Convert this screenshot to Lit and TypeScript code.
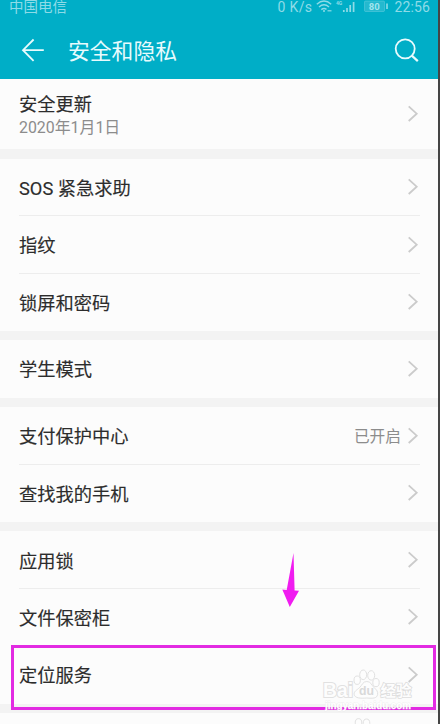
import { LitElement, html, css, svg, nothing } from "lit";
import { customElement, property } from "lit/decorators.js";

interface Item {
  title: string;
  note?: string;
  value?: string;
}

const GROUPS: Item[][] = [
  [{ title: "安全更新", note: "2020年1月1日" }],
  [{ title: "SOS 紧急求助" }, { title: "指纹" }, { title: "锁屏和密码" }],
  [{ title: "学生模式" }],
  [{ title: "支付保护中心", value: "已开启" }, { title: "查找我的手机" }],
  [{ title: "应用锁" }, { title: "文件保密柜" }, { title: "定位服务" }],
];

@customElement("status-bar")
class StatusBar extends LitElement {
  static styles = css`
    :host {
      display: flex;
      justify-content: space-between;
      height: 22px;
      padding: 0 8px 0 9px;
      font-size: 14px;
      line-height: 14px;
      color: #8edbe7;
    }
    .carrier { font-size: 14.5px; line-height: 15px; }
    .info { display: flex; gap: 4px; }
    .net { letter-spacing: 0.35px; }
    .time { letter-spacing: 0.15px; }
    svg { display: block; }
    .small { font: 700 5px "Roboto", sans-serif; }
    .level { font: 700 9.5px "Roboto", sans-serif; }
  `;

  render() {
    return html`
      <span class="carrier">中国电信</span>
      <div class="info">
        <span class="net">0 K/s</span>
        <svg width="74" height="14" viewBox="0 0 74 14" fill="none" stroke="#8edbe7" stroke-width="1.4">
          <path d="M.8 4.2Q8 -2 15.2 4.2M3 7Q8 2.6 13 7M5.3 9.6Q8 7.4 10.5 9.4" />
          <circle cx="8" cy="11" r="1" fill="#8edbe7" stroke="none" />
          <path d="M11.5 10.8h4" stroke-width="1.2" />
          <text class="small" x="20" y="4.8" fill="#8edbe7" stroke="none">4G</text>
          <path d="M27.8 12v-2M31 12V8M34.2 12V5M37.6 12V2" stroke-width="1.7" />
          <rect x="48.5" y="1" width="20" height="10.5" rx="1" fill="#8edbe7" fill-opacity=".25" stroke-opacity=".35" stroke-width="1" />
          <text class="level" x="52.8" y="9.6" fill="#a5e4ec" stroke="none">80</text>
          <path d="M71 3.5v5.5" stroke-width="1.6" />
        </svg>
        <span class="time">22:56</span>
      </div>
    `;
  }
}

@customElement("title-bar")
class TitleBar extends LitElement {
  static styles = css`
    :host {
      display: flex;
      align-items: center;
      height: 57px;
      padding: 0 19px 0 20px;
      color: #e8fbfd;
    }
    .title {
      flex: 1;
      margin-left: 22px;
      padding-top: 2px;
      font-size: 21.8px;
      line-height: 30px;
    }
    svg { display: block; }
  `;

  render() {
    return html`
      <svg width="26" height="26" viewBox="0 0 26 26" fill="none" stroke="#e8fbfd" stroke-width="1.8">
        <path d="M23.8 12.2H3M13.6 1.5 3 12.2l10.6 10.7" />
      </svg>
      <span class="title">安全和隐私</span>
      <svg width="26" height="26" viewBox="0 0 26 26" fill="none" stroke="#e8fbfd" stroke-width="1.8">
        <circle cx="12.2" cy="10.8" r="9.5" />
        <path d="m18.8 17.6 6 5.5" stroke-width="2.2" />
      </svg>
    `;
  }
}

@customElement("settings-row")
class SettingsRow extends LitElement {
  @property({ attribute: false }) item!: Item;

  static styles = css`
    :host {
      display: flex;
      align-items: center;
      box-sizing: border-box;
      height: 57.4px;
      margin: 0 18px 0 19px;
    }
    .label { flex: 1; display: flex; flex-direction: column; padding-top: 3.2px; }
    .title { font-size: 18.25px; line-height: 24px; color: #2c2c2c; -webkit-text-stroke: 0.15px #2c2c2c; }
    .note { font-size: 15.9px; line-height: 22px; color: #8c8c8c; }
    .value { font-size: 15.7px; line-height: 24px; padding-top: 3.2px; color: #8c8c8c; margin-right: 6px; }
    .chevron { display: block; margin-right: 1px; }
  `;

  render() {
    const { title, note, value } = this.item;
    return html`
      <div class="label">
        <span class="title">${title}</span>
        ${note ? html`<span class="note">${note}</span>` : nothing}
      </div>
      ${value ? html`<span class="value">${value}</span>` : nothing}
      <svg class="chevron" width="12" height="18" viewBox="0 0 12 18" fill="none" stroke="#cbcbcb" stroke-width="1.8">
        <path d="m1.7 1.4 8 7.3-8 7.3" />
      </svg>
    `;
  }
}

@customElement("site-mark")
class SiteMark extends LitElement {
  static styles = css`
    :host { display: block; }
    svg { display: block; overflow: visible; }
    .shape { fill: #fdfdfd; stroke: #e1e1e1; stroke-width: 1; }
    .word { font: 700 19.5px "Liberation Sans", sans-serif; paint-order: stroke; stroke-width: 2; }
    .du { font: 700 13px "Liberation Sans", sans-serif; fill: #d9d9d9; stroke: none; }
    .han { font: 700 15px "Noto Sans CJK SC", sans-serif; paint-order: stroke; stroke: #dedede; stroke-width: 1.6; }
    .url { font: 700 10px "Liberation Sans", sans-serif; fill: #fff; stroke: #e6e6e6; stroke-opacity: 0.6; stroke-width: 0.8; paint-order: stroke; }
  `;

  render() {
    const toes = [
      [34.2, 10.2, 3.2, 4.2],
      [40.2, 4.8, 3.5, 4.8],
      [48.2, 5.4, 3.5, 4.7],
      [53, 12.6, 3.2, 4.1],
    ];
    return html`
      <svg width="92" height="54" viewBox="0 0 92 54">
        <text class="shape word" x="0" y="27" textLength="30" lengthAdjust="spacingAndGlyphs">Bai</text>
        ${toes.map(([cx, cy, rx, ry]) => svg`<ellipse class="shape" cx=${cx} cy=${cy} rx=${rx} ry=${ry} />`)}
        <path class="shape" d="M43.8 11.5c4 0 4.5 3.3 7 5.8 3 2.9 4.3 4.2 3.8 7.2-.7 4-4.5 4-10.8 3.5-6.3.5-12 .3-12.6-3.6-.4-3 2.6-4.3 5.6-7 2.6-2.6 3-5.9 7-5.9Z" />
        <text class="du" x="36" y="25.2" textLength="15" lengthAdjust="spacingAndGlyphs">du</text>
        <text class="shape han" x="57.5" y="26" textLength="31" lengthAdjust="spacingAndGlyphs">经验</text>
        <text class="url" x="2" y="38.6" textLength="86" lengthAdjust="spacingAndGlyphs">jingyan.baidu.com</text>
        <ellipse class="shape" cx="35.5" cy="53" rx="3.3" ry="4.4" />
        <ellipse class="shape" cx="43.5" cy="53.4" rx="3.3" ry="4.4" />
      </svg>
    `;
  }
}

@customElement("app-root")
class AppRoot extends LitElement {
  static styles = css`
    :host {
      display: block;
      position: relative;
      box-sizing: border-box;
      width: 440px;
      height: 724px;
      overflow: hidden;
      border-right: 2px solid #454545;
      background: #f3f3f3;
      font-family: "Roboto", "Noto Sans CJK SC", sans-serif;
    }
    .header { background: #00aec7; height: 79px; }
    .list { display: flex; flex-direction: column; gap: 9.5px; }
    .group { background: #fcfcfc; }
    .group:first-child { height: 70px; display: flex; flex-direction: column; justify-content: center; }
    .line { height: 1px; margin: -0.5px 18px -0.5px 19px; background: #ededed; }
    .rest { height: 40px; }
    .frame {
      position: absolute;
      left: 11px;
      top: 645px;
      width: 425px;
      height: 65px;
      box-sizing: border-box;
      border: 3px solid #e22be2;
    }
    .arrow { position: absolute; left: 282px; top: 552px; }
    .mark { position: absolute; left: 323px; top: 670px; }
  `;

  render() {
    return html`
      <div class="header">
        <status-bar></status-bar>
        <title-bar></title-bar>
      </div>
      <div class="list">
        ${GROUPS.map(
          (group) => html`
            <div class="group">
              ${group.map(
                (item, i) => html`
                  ${i ? html`<div class="line"></div>` : nothing}
                  <settings-row .item=${item}></settings-row>
                `,
              )}
            </div>
          `,
        )}
        <div class="group rest"></div>
      </div>
      <div class="frame"></div>
      <svg class="arrow" width="18" height="56" viewBox="0 0 18 56">
        <path d="M11.5 1 12.6 38.5 17 38.8 7.8 55 .3 37.5l4.4.5Z" fill="#f01cf0" />
      </svg>
      <site-mark class="mark"></site-mark>
    `;
  }
}
